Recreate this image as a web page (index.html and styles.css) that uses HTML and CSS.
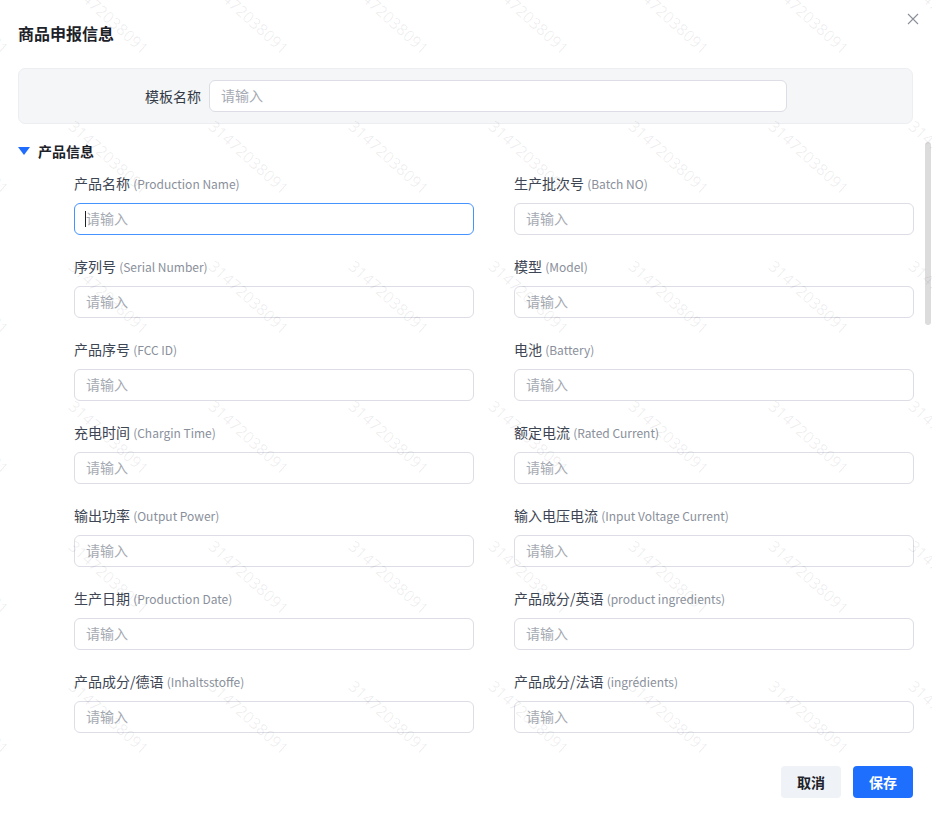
FILE: index.html
```html
<!DOCTYPE html>
<html lang="zh-CN">
<head>
<meta charset="utf-8">
<title>商品申报信息</title>
<link rel="stylesheet" href="styles.css">
</head>
<body>
<div class="modal">
  <header class="modal-header">
    <h2 class="modal-title">商品申报信息</h2>
    <button class="close" aria-label="关闭">
      <svg width="12" height="12" viewBox="0 0 12 12"><path d="M1 1L11 11M11 1L1 11" stroke="#8a8f99" stroke-width="1.1" fill="none"/></svg>
    </button>
  </header>

  <div class="modal-body">
    <div class="template-box">
      <label class="template-label">模板名称</label>
      <input class="input template-input" placeholder="请输入">
    </div>

    <section class="section">
      <div class="section-head"><span class="tri"></span><span class="section-title">产品信息</span></div>
      <div class="form-grid">
        <div class="field">
          <label class="field-label">产品名称 <span class="en">(Production Name)</span></label>
          <div class="input-wrap focused"><input class="input" placeholder="请输入"></div>
        </div>
        <div class="field">
          <label class="field-label">生产批次号 <span class="en">(Batch NO)</span></label>
          <div class="input-wrap"><input class="input" placeholder="请输入"></div>
        </div>
        <div class="field">
          <label class="field-label">序列号 <span class="en">(Serial Number)</span></label>
          <div class="input-wrap"><input class="input" placeholder="请输入"></div>
        </div>
        <div class="field">
          <label class="field-label">模型 <span class="en">(Model)</span></label>
          <div class="input-wrap"><input class="input" placeholder="请输入"></div>
        </div>
        <div class="field">
          <label class="field-label">产品序号 <span class="en">(FCC ID)</span></label>
          <div class="input-wrap"><input class="input" placeholder="请输入"></div>
        </div>
        <div class="field">
          <label class="field-label">电池 <span class="en">(Battery)</span></label>
          <div class="input-wrap"><input class="input" placeholder="请输入"></div>
        </div>
        <div class="field">
          <label class="field-label">充电时间 <span class="en">(Chargin Time)</span></label>
          <div class="input-wrap"><input class="input" placeholder="请输入"></div>
        </div>
        <div class="field">
          <label class="field-label">额定电流 <span class="en">(Rated Current)</span></label>
          <div class="input-wrap"><input class="input" placeholder="请输入"></div>
        </div>
        <div class="field">
          <label class="field-label">输出功率 <span class="en">(Output Power)</span></label>
          <div class="input-wrap"><input class="input" placeholder="请输入"></div>
        </div>
        <div class="field">
          <label class="field-label">输入电压电流 <span class="en">(Input Voltage Current)</span></label>
          <div class="input-wrap"><input class="input" placeholder="请输入"></div>
        </div>
        <div class="field">
          <label class="field-label">生产日期 <span class="en">(Production Date)</span></label>
          <div class="input-wrap"><input class="input" placeholder="请输入"></div>
        </div>
        <div class="field">
          <label class="field-label">产品成分/英语 <span class="en">(product ingredients)</span></label>
          <div class="input-wrap"><input class="input" placeholder="请输入"></div>
        </div>
        <div class="field">
          <label class="field-label">产品成分/德语 <span class="en">(Inhaltsstoffe)</span></label>
          <div class="input-wrap"><input class="input" placeholder="请输入"></div>
        </div>
        <div class="field">
          <label class="field-label">产品成分/法语 <span class="en">(ingrédients)</span></label>
          <div class="input-wrap"><input class="input" placeholder="请输入"></div>
        </div>
      </div>
    </section>
  </div>

  <footer class="modal-footer">
    <button class="btn btn-cancel">取消</button>
    <button class="btn btn-primary">保存</button>
  </footer>

  <div class="scrollbar"></div>

  <div class="watermark" aria-hidden="true">
    <span>31472038091</span><span>31472038091</span><span>31472038091</span><span>31472038091</span><span>31472038091</span><span>31472038091</span><span>31472038091</span><span>31472038091</span>
    <span>31472038091</span><span>31472038091</span><span>31472038091</span><span>31472038091</span><span>31472038091</span><span>31472038091</span><span>31472038091</span><span>31472038091</span>
    <span>31472038091</span><span>31472038091</span><span>31472038091</span><span>31472038091</span><span>31472038091</span><span>31472038091</span><span>31472038091</span><span>31472038091</span>
    <span>31472038091</span><span>31472038091</span><span>31472038091</span><span>31472038091</span><span>31472038091</span><span>31472038091</span><span>31472038091</span><span>31472038091</span>
    <span>31472038091</span><span>31472038091</span><span>31472038091</span><span>31472038091</span><span>31472038091</span><span>31472038091</span><span>31472038091</span><span>31472038091</span>
    <span>31472038091</span><span>31472038091</span><span>31472038091</span><span>31472038091</span><span>31472038091</span><span>31472038091</span><span>31472038091</span><span>31472038091</span>
    <span>31472038091</span><span>31472038091</span><span>31472038091</span><span>31472038091</span><span>31472038091</span><span>31472038091</span><span>31472038091</span><span>31472038091</span>
  </div>
</div>
</body>
</html>
```

FILE: styles.css
```css
* { box-sizing: border-box; }

html, body {
  margin: 0;
  padding: 0;
  background: #ffffff;
}

body {
  font-family: "Noto Sans CJK SC", "Noto Sans", sans-serif;
  color: #1d2129;
}

.modal {
  position: relative;
  width: 932px;
  height: 816px;
  overflow: hidden;
  display: flex;
  flex-direction: column;
  background: #fff;
}

.modal-header {
  padding: 21px 18px 23px;
}

.modal-title {
  margin: 0;
  font-size: 16px;
  line-height: 24px;
  height: 24px;
  font-weight: 700;
  color: #1d2129;
}

.close {
  position: absolute;
  top: 12px;
  right: 12px;
  width: 14px;
  height: 14px;
  padding: 1px;
  border: 0;
  background: transparent;
  display: flex;
  align-items: center;
  justify-content: center;
}

.modal-body {
  flex: 1;
  padding: 0 19px 0 18px;
}

.template-box {
  display: flex;
  align-items: center;
  height: 56px;
  padding: 0;
  background: #f5f6f8;
  border: 1px solid #eceef2;
  border-radius: 7px;
}

.template-label {
  width: 182px;
  text-align: right;
  margin-right: 8px;
  font-size: 14px;
  line-height: 20px;
  color: #333a45;
}

.input {
  display: block;
  width: 100%;
  height: 32px;
  padding: 0 11px 2px;
  border: 1px solid #dcdde5;
  border-radius: 6px;
  background: #fff;
  font-family: inherit;
  font-size: 14px;
  color: #1d2129;
  outline: none;
}

.input::placeholder {
  color: #a6aab3;
}

.template-input {
  width: 578px;
}

.section-head {
  display: flex;
  align-items: center;
  margin-top: 17px;
  height: 20px;
}

.tri {
  width: 0;
  height: 0;
  border-left: 6px solid transparent;
  border-right: 6px solid transparent;
  border-top: 8px solid #1f6cff;
  margin-right: 8px;
}

.section-title {
  font-size: 14px;
  line-height: 20px;
  font-weight: 700;
  color: #1d2129;
}

.form-grid {
  display: grid;
  grid-template-columns: 400px 400px;
  column-gap: 40px;
  row-gap: 22px;
  margin-top: 13px;
  padding-left: 56px;
}

.field-label {
  display: block;
  height: 19px;
  font-size: 14px;
  line-height: 19px;
  margin-bottom: 10px;
  color: #3e4553;
  white-space: nowrap;
}

.field-label .en {
  font-size: 12px;
  line-height: 12px;
  color: #8a909b;
}

.input-wrap {
  position: relative;
}

.input-wrap.focused .input {
  border-color: #4593ff;
}

.input-wrap.focused::before {
  content: "";
  position: absolute;
  left: 11px;
  top: 8px;
  width: 1px;
  height: 16px;
  background: #1d2129;
  z-index: 1;
}

.modal-footer {
  display: flex;
  justify-content: flex-end;
  gap: 12px;
  padding: 0 19px 18px 0;
}

.btn {
  width: 60px;
  height: 32px;
  border: 0;
  border-radius: 4px;
  font-family: inherit;
  font-size: 14px;
  font-weight: 700;
  line-height: 32px;
  padding: 0;
}

.btn-cancel {
  background: #eff2f6;
  color: #1d2129;
}

.btn-primary {
  background: #1f6fff;
  color: #fff;
}

.scrollbar {
  position: absolute;
  left: 925px;
  top: 142px;
  width: 6px;
  height: 183px;
  border-radius: 3px;
  background: #dcdcdd;
}

.watermark {
  position: absolute;
  left: -62px;
  top: -24px;
  display: grid;
  grid-template-columns: repeat(8, 140px);
  grid-auto-rows: 140px;
  pointer-events: none;
  z-index: 5;
}

.watermark span {
  display: block;
  width: 120px;
  font-family: "Noto Sans", sans-serif;
  font-size: 16px;
  font-weight: 400;
  line-height: 20px;
  color: rgba(0, 0, 0, 0.065);
  transform: rotate(42deg);
  transform-origin: 0 0;
  white-space: nowrap;
}
```
